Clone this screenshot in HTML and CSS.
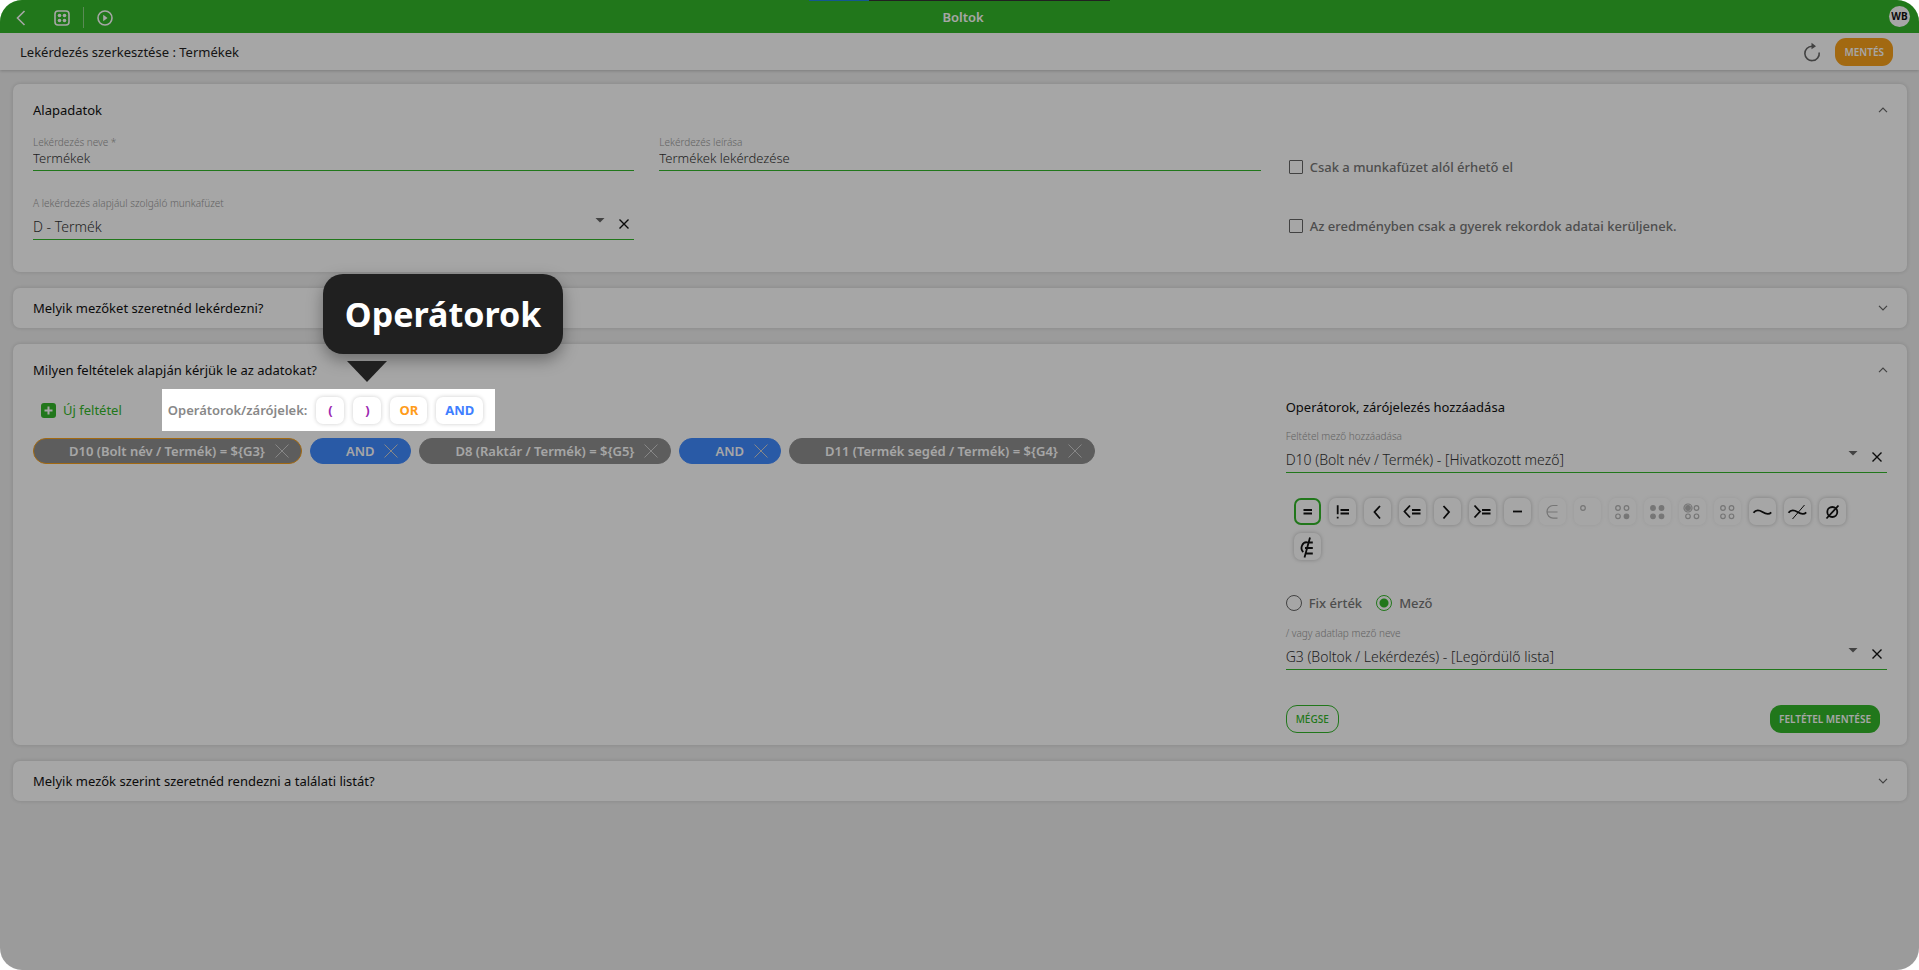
FILE: index.html
```html
<!DOCTYPE html>
<html lang="hu">
<head>
<meta charset="utf-8">
<title>Boltok</title>
<link rel="stylesheet" href="styles.css">
</head>
<body>
<div class="app">
  <header class="topbar">
    <nav class="topbar-nav" aria-label="Navigáció">
      <button class="icon-btn back" aria-label="Vissza"><svg width="10" height="16" viewBox="0 0 10 16"><path d="M8.500 1L1.500 8l7 7"/></svg></button>
      <button class="icon-btn grid" aria-label="Alkalmazások"><svg width="16" height="16" viewBox="0 0 16 16"><rect x="1" y="1" width="14" height="14" rx="3"/><circle class="dot" cx="5.500" cy="5.500" r="1.800"/><circle class="dot" cx="10.500" cy="5.500" r="1.800"/><circle class="dot" cx="5.500" cy="10.500" r="1.800"/><circle class="dot" cx="10.500" cy="10.500" r="1.800"/></svg></button>
      <button class="icon-btn play" aria-label="Indítás"><svg width="16" height="16" viewBox="0 0 16 16"><circle cx="8" cy="8" r="7"/><path class="dot" d="M6.200 4.800v6.400L10.500 8z"/></svg></button>
    </nav>
    <h1 class="topbar-title">Boltok</h1>
    <span class="avatar">WB</span>
    <div class="progress"><span class="progress-value"></span></div>
  </header>

  <div class="subbar">
    <h2 class="subbar-title">Lekérdezés szerkesztése : Termékek</h2>
    <button class="icon-btn refresh" aria-label="Frissítés"><svg width="18" height="20" viewBox="0 0 18 20"><path d="M16.200 10.500A7.200 7.200 0 1 1 9 4.200h2.500"/><path class="dot" d="M8.500 0.800L13 4.300 8.500 7.200z"/></svg></button>
    <button class="btn btn-save">MENTÉS</button>
  </div>

  <main class="content">
    <section class="card">
      <div class="card-head">
        <h3>Alapadatok</h3>
        <button class="icon-btn toggle" aria-label="Becsukás"><svg width="10" height="6" viewBox="0 0 10 6"><path d="M1 5.200L5 1.200l4 4"/></svg></button>
      </div>
      <div class="basics">
        <div class="field">
          <label for="q-name">Lekérdezés neve *</label>
          <input id="q-name" type="text" value="Termékek">
        </div>
        <div class="field">
          <label for="q-desc">Lekérdezés leírása</label>
          <input id="q-desc" type="text" value="Termékek lekérdezése">
        </div>
        <div class="checks">
          <label class="check"><input type="checkbox"><span>Csak a munkafüzet alól érhető el</span></label>
          <label class="check"><input type="checkbox"><span>Az eredményben csak a gyerek rekordok adatai kerüljenek.</span></label>
        </div>
        <div class="field field-select">
          <label for="q-base">A lekérdezés alapjául szolgáló munkafüzet</label>
          <div class="select-row">
            <select id="q-base"><option>D - Termék</option></select>
            <svg class="caret" width="10" height="5" viewBox="0 0 10 5"><path d="M0.500 0h9L5 4.500z"/></svg>
            <button class="icon-btn clear" aria-label="Törlés"><svg width="12" height="12" viewBox="0 0 12 12"><path d="M1.500 1.500l9 9M10.500 1.500l-9 9"/></svg></button>
          </div>
        </div>
      </div>
    </section>

    <section class="card card-closed">
      <div class="card-head">
        <h3>Melyik mezőket szeretnéd lekérdezni?</h3>
        <button class="icon-btn toggle" aria-label="Kinyitás"><svg width="10" height="6" viewBox="0 0 10 6"><path d="M1 0.800l4 4 4-4"/></svg></button>
      </div>
    </section>

    <section class="card card-conditions">
      <div class="card-head">
        <h3>Milyen feltételek alapján kérjük le az adatokat?</h3>
        <button class="icon-btn toggle" aria-label="Becsukás"><svg width="10" height="6" viewBox="0 0 10 6"><path d="M1 5.200L5 1.200l4 4"/></svg></button>
      </div>
      <div class="conditions">
        <div class="builder">
          <div class="toolbar">
            <button class="add"><svg width="15" height="15" viewBox="0 0 15 15"><rect width="15" height="15" rx="3"/><path d="M7.500 3.500v8M3.500 7.500h8"/></svg>Új feltétel</button>
            <div class="spotlight">
              <div class="tooltip" role="tooltip">Operátorok</div>
              <span class="spotlight-label">Operátorok/zárójelek:</span>
              <button class="token paren">(</button>
              <button class="token paren">)</button>
              <button class="token or">OR</button>
              <button class="token and">AND</button>
            </div>
          </div>
          <div class="chips">
            <span class="chip chip-active">D10 (Bolt név / Termék) = ${G3}<button class="icon-btn" aria-label="Törlés"><svg width="16" height="16" viewBox="0 0 16 16"><path d="M1.500 1.500l13 13M14.500 1.500l-13 13"/></svg></button></span>
            <span class="chip chip-and">AND<button class="icon-btn" aria-label="Törlés"><svg width="16" height="16" viewBox="0 0 16 16"><path d="M1.500 1.500l13 13M14.500 1.500l-13 13"/></svg></button></span>
            <span class="chip">D8 (Raktár / Termék) = ${G5}<button class="icon-btn" aria-label="Törlés"><svg width="16" height="16" viewBox="0 0 16 16"><path d="M1.500 1.500l13 13M14.500 1.500l-13 13"/></svg></button></span>
            <span class="chip chip-and">AND<button class="icon-btn" aria-label="Törlés"><svg width="16" height="16" viewBox="0 0 16 16"><path d="M1.500 1.500l13 13M14.500 1.500l-13 13"/></svg></button></span>
            <span class="chip">D11 (Termék segéd / Termék) = ${G4}<button class="icon-btn" aria-label="Törlés"><svg width="16" height="16" viewBox="0 0 16 16"><path d="M1.500 1.500l13 13M14.500 1.500l-13 13"/></svg></button></span>
          </div>
        </div>

        <form class="editor">
          <h4>Operátorok, zárójelezés hozzáadása</h4>
          <div class="field field-select">
            <label for="c-field">Feltétel mező hozzáadása</label>
            <div class="select-row">
              <select id="c-field"><option>D10 (Bolt név / Termék) - [Hivatkozott mező]</option></select>
              <svg class="caret" width="10" height="5" viewBox="0 0 10 5"><path d="M0.500 0h9L5 4.500z"/></svg>
              <button type="button" class="icon-btn clear" aria-label="Törlés"><svg width="12" height="12" viewBox="0 0 12 12"><path d="M1.500 1.500l9 9M10.500 1.500l-9 9"/></svg></button>
            </div>
          </div>
          <div class="ops">
            <button type="button" class="op selected" aria-label="Egyenlő"><svg viewBox="0 0 27 27"><path d="M9.500 12h8.500M9.500 15.500h8.500"/></svg></button>
            <button type="button" class="op" aria-label="Nem egyenlő"><svg viewBox="0 0 27 27"><path d="M8.700 7.200v9M8.700 18.700v1.800M11.500 12h8.500M11.500 15.500h8.500"/></svg></button>
            <button type="button" class="op" aria-label="Kisebb"><svg viewBox="0 0 27 27"><path d="M16 8l-5.500 6 5.500 6.500"/></svg></button>
            <button type="button" class="op" aria-label="Kisebb vagy egyenlő"><svg viewBox="0 0 27 27"><path d="M11 7.500l-5.500 6 5.500 6M13 12h8.500M13 15.500h8.500"/></svg></button>
            <button type="button" class="op" aria-label="Nagyobb"><svg viewBox="0 0 27 27"><path d="M9.500 8l5.500 6-5.500 6.500"/></svg></button>
            <button type="button" class="op" aria-label="Nagyobb vagy egyenlő"><svg viewBox="0 0 27 27"><path d="M5.500 7.500l5.500 6-5.500 6M13 12h8.500M13 15.500h8.500"/></svg></button>
            <button type="button" class="op" aria-label="Tartomány"><svg viewBox="0 0 27 27"><path d="M9 13.500h9"/></svg></button>
            <button type="button" class="op" disabled aria-label="Eleme"><svg viewBox="0 0 27 27"><path d="M18.500 7.500h-4.500a6 6.300 0 0 0 0 12.600h4.500M8 14h10.500"/></svg></button>
            <button type="button" class="op" disabled aria-label="Egy"><svg viewBox="0 0 27 27"><circle cx="9" cy="10" r="2.300"/></svg></button>
            <button type="button" class="op" disabled aria-label="Pontosan egy"><svg viewBox="0 0 27 27"><circle cx="9" cy="10" r="2.300"/><circle cx="17.500" cy="10" r="2.300"/><circle cx="9" cy="18.300" r="2.300"/><circle class="full" cx="17.500" cy="18.300" r="2.300"/></svg></button>
            <button type="button" class="op" disabled aria-label="Mind"><svg viewBox="0 0 27 27"><circle class="full" cx="9" cy="10" r="2.300"/><circle class="full" cx="17.500" cy="10" r="2.300"/><circle class="full" cx="9" cy="18.300" r="2.300"/><circle class="full" cx="17.500" cy="18.300" r="2.300"/></svg></button>
            <button type="button" class="op" disabled aria-label="Legalább egy"><svg viewBox="0 0 27 27"><circle cx="9" cy="10" r="4"/><circle class="full" cx="9" cy="10" r="2.300"/><circle cx="17.500" cy="10" r="2.300"/><circle cx="9" cy="18.300" r="2.300"/><circle cx="17.500" cy="18.300" r="2.300"/></svg></button>
            <button type="button" class="op" disabled aria-label="Egyik sem"><svg viewBox="0 0 27 27"><circle cx="9" cy="10" r="2.300"/><circle cx="17.500" cy="10" r="2.300"/><circle cx="9" cy="18.300" r="2.300"/><circle cx="17.500" cy="18.300" r="2.300"/></svg></button>
            <button type="button" class="op" aria-label="Hasonló"><svg viewBox="0 0 27 27"><path d="M4.500 14.800c2.500-3.500 5.500-3 9-.8s6.500 2.800 8.700.300"/></svg></button>
            <button type="button" class="op" aria-label="Nem hasonló"><svg viewBox="0 0 27 27"><path d="M4.500 14.800c2.500-3.500 5.500-3 9-.8s6.500 2.800 8.700.300"/><path class="thin" d="M20.500 7L8.500 21"/></svg></button>
            <button type="button" class="op" aria-label="Üres"><svg viewBox="0 0 27 27"><circle cx="13.300" cy="14" r="5"/><path d="M19.500 7.500L7.500 20.500"/></svg></button>
            <button type="button" class="op" aria-label="Nem eleme"><svg viewBox="0 0 27 27"><path d="M18.800 9.500h-5a5 5.500 0 0 0-4.500 9.500M11.500 20.500h7.300M11 15h7.800M16 4.500L10.500 24.500"/></svg></button>
          </div>
          <div class="radios">
            <label class="radio"><input type="radio" name="kind"><span>Fix érték</span></label>
            <label class="radio"><input type="radio" name="kind" checked><span>Mező</span></label>
          </div>
          <div class="field field-select">
            <label for="c-value">/ vagy adatlap mező neve</label>
            <div class="select-row">
              <select id="c-value"><option>G3 (Boltok / Lekérdezés) - [Legördülő lista]</option></select>
              <svg class="caret" width="10" height="5" viewBox="0 0 10 5"><path d="M0.500 0h9L5 4.500z"/></svg>
              <button type="button" class="icon-btn clear" aria-label="Törlés"><svg width="12" height="12" viewBox="0 0 12 12"><path d="M1.500 1.500l9 9M10.500 1.500l-9 9"/></svg></button>
            </div>
          </div>
          <div class="actions">
            <button type="button" class="btn btn-cancel">MÉGSE</button>
            <button type="button" class="btn btn-submit">FELTÉTEL MENTÉSE</button>
          </div>
        </form>
      </div>
    </section>

    <section class="card card-closed">
      <div class="card-head">
        <h3>Melyik mezők szerint szeretnéd rendezni a találati listát?</h3>
        <button class="icon-btn toggle" aria-label="Kinyitás"><svg width="10" height="6" viewBox="0 0 10 6"><path d="M1 0.800l4 4 4-4"/></svg></button>
      </div>
    </section>
  </main>
</div>
</body>
</html>
```
FILE: styles.css
```css
:root {
  --green: #34b72a;
  --orange: #f9a11b;
  --blue: #3f8aff;
  --dark: #202020;
}

* { box-sizing: border-box; }

body {
  margin: 0;
  background: #fff;
  font-family: "Noto Sans", "Open Sans", sans-serif;
  font-size: 13px;
  line-height: 18px;
  color: #111;
}

h1, h2, h3, h4 { margin: 0; font-weight: 400; font-size: 13px; }

button, input, select { font: inherit; color: inherit; margin: 0; }

button { border: 0; padding: 0; background: none; }

svg { display: block; fill: none; stroke: currentColor; }

.dot { fill: currentColor; stroke: none; }

.app {
  min-height: 100vh;
  overflow: hidden;
  border-radius: 22px;
  background: #efefef;
}

.icon-btn { display: flex; align-items: center; justify-content: center; }

/* Top bar */
.topbar {
  position: relative;
  display: grid;
  grid-template-columns: 1fr auto 1fr;
  align-items: center;
  height: 33px;
  padding: 0 9px 0 16px;
  background: var(--green);
  color: #fff;
}

.topbar-nav { display: flex; align-items: center; height: 21px; padding-top: 2px; }
.topbar-nav svg { stroke-width: 1.6; }
.topbar-nav .grid { margin-left: 28px; }
.topbar-nav .play {
  height: 21px;
  margin-left: 13px;
  padding-left: 13px;
  border-left: 1px solid #8bd485;
}

.topbar-title { font-weight: 600; }

.avatar {
  justify-self: end;
  width: 21px;
  height: 21px;
  border-radius: 50%;
  background: #fff;
  color: #111;
  font-size: 10px;
  font-weight: 700;
  line-height: 21px;
  text-align: center;
}

.progress {
  position: absolute;
  top: 0;
  left: 50%;
  width: 301px;
  height: 1px;
  margin-left: -151px;
  background: #333;
}

.progress-value { display: block; width: 20%; height: 1px; background: #1f86dd; }

/* Sub bar */
.subbar {
  display: flex;
  align-items: center;
  height: 37px;
  padding: 0 26px 0 20px;
  background: #fff;
  box-shadow: 0 1px 3px rgba(0, 0, 0, .2);
}

.subbar-title { flex: 1; color: #222; }
.refresh { margin-right: 14px; color: #666; }
.refresh svg { stroke-width: 1.6; }

.btn {
  height: 28px;
  padding: 0 9px;
  border-radius: 11px;
  font-size: 10px;
  font-weight: 600;
}

.btn-save { background: var(--orange); color: #fff; }
.btn-submit { background: var(--green); color: #fff; }
.btn-cancel { border: 1px solid var(--green); color: var(--green); font-weight: 500; }

/* Cards */
.content {
  display: flex;
  flex-direction: column;
  gap: 16px;
  padding: 14px 12px 24px 13px;
}

.card {
  padding: 0 20px;
  border-radius: 7px;
  background: #fff;
  box-shadow: 0 0 4px rgba(0, 0, 0, .16);
}

.card-head {
  display: flex;
  align-items: center;
  justify-content: space-between;
  height: 51px;
}

.card-closed .card-head { height: 40px; }
.card-conditions .card-head { height: 45px; padding-top: 7px; }
.toggle { width: 8px; height: 10px; color: #666; }
.toggle svg { flex: none; stroke-width: 1.2; }

/* Fields */
.field { display: flex; flex-direction: column; }

.field label { font-size: 10px; line-height: 14px; color: #999; font-weight: 300; }

.field input,
.field select {
  width: 100%;
  padding: 0;
  border: 0;
  border-radius: 0;
  outline: 0;
  background: none;
  appearance: none;
  color: #333;
  font-weight: 300;
}

.field input { height: 22px; padding-bottom: 4px; border-bottom: 1px solid var(--green); }

.select-row {
  display: flex;
  align-items: center;
  height: 30px;
  padding-right: 4px;
  border-bottom: 1px solid var(--green);
}

.field-select select { flex: 1; align-self: flex-end; height: 24px; font-size: 14px; }
.caret { margin-bottom: 9px; fill: #666; stroke: none; }
.clear { width: 12px; height: 12px; margin: 0 0 2px 13px; color: #111; }
.clear svg { stroke-width: 1.4; }

.basics {
  display: grid;
  grid-template-columns: repeat(3, 1fr);
  column-gap: 25px;
  row-gap: 25px;
  padding-bottom: 32px;
}

.checks {
  grid-column: 3;
  grid-row: 1 / span 2;
  display: flex;
  flex-direction: column;
  gap: 41px;
  padding: 23px 0 0 3px;
}

.check { display: flex; align-items: center; gap: 7px; color: #777; font-weight: 500; }

.check input {
  width: 14px;
  height: 14px;
  border: 1px solid #666;
  border-radius: 1px;
  appearance: none;
}

/* Conditions */
.conditions {
  display: grid;
  grid-template-columns: repeat(3, 1fr);
  column-gap: 25px;
  padding-bottom: 12px;
}

.builder { grid-column: span 2; }

.toolbar { display: flex; align-items: center; gap: 40px; padding-left: 8px; }

.add { display: flex; align-items: center; gap: 7px; color: var(--green); }
.add svg { fill: var(--green); stroke: none; }
.add path { stroke: #fff; stroke-width: 2; }

/* Highlighted block: its outer shadow dims everything else */
.spotlight {
  position: relative;
  z-index: 10;
  display: flex;
  align-items: center;
  gap: 9px;
  height: 42px;
  padding: 0 12px 0 6px;
  background: #fff;
  box-shadow: 0 0 0 3000px rgba(0, 0, 0, .35);
}

.spotlight-label { font-weight: 600; color: #888; }

.token {
  height: 27px;
  min-width: 28px;
  padding: 0 9px;
  border-radius: 7px;
  background: #fff;
  box-shadow: 0 0 4px rgba(0, 0, 0, .2);
  font-weight: 700;
}

.paren { color: #9c27b0; }
.or { color: #ff9c1a; }
.and { color: #3f7fff; }

.tooltip {
  position: absolute;
  bottom: 77px;
  left: 161px;
  padding: 16px 22px;
  border-radius: 20px;
  background: var(--dark);
  box-shadow: 0 6px 16px rgba(0, 0, 0, .35);
  color: #fff;
  font-size: 34px;
  font-weight: 700;
  line-height: 48px;
}

.tooltip::after {
  content: "";
  position: absolute;
  top: 87px;
  left: 24px;
  border: 20px solid transparent;
  border-top: 21px solid var(--dark);
  border-bottom: 0;
}

.chips { display: flex; flex-wrap: wrap; gap: 8px; padding-top: 7px; }

.chip {
  display: flex;
  align-items: center;
  gap: 9px;
  height: 26px;
  padding: 0 11px 0 35px;
  border: 1px solid #8f8f8f;
  border-radius: 13px;
  background: #8f8f8f;
  color: #fff;
  font-weight: 600;
}

.chip .icon-btn { color: #d0d0d0; }
.chip-active { border-color: var(--orange); }
.chip-and { border-color: var(--blue); background: var(--blue); }

.editor { padding-top: 9px; }
.editor > h4 { padding-bottom: 13px; }

.ops { display: flex; flex-wrap: wrap; gap: 8px; padding: 25px 20px 0 8px; }

.op {
  width: 27px;
  height: 27px;
  border-radius: 7px;
  background: #fff;
  box-shadow: 0 0 4px rgba(0, 0, 0, .25);
}

.op svg { width: 27px; height: 27px; stroke-width: 1.8; }
.op.selected { box-shadow: inset 0 0 0 2px var(--green); }
.op:disabled { color: #b5b5b5; box-shadow: 0 0 4px rgba(0, 0, 0, .08); }
.op:disabled svg { stroke-width: 1.2; }
.op .full { fill: currentColor; }
.op .thin { stroke-width: 1; }

.radios { display: flex; gap: 14px; padding: 34px 0 14px; }
.radio { display: flex; align-items: center; gap: 7px; color: #777; font-weight: 500; }

.radio input {
  width: 16px;
  height: 16px;
  border: 1px solid #666;
  border-radius: 50%;
  appearance: none;
}

.radio input:checked {
  border-color: var(--green);
  background: radial-gradient(circle, var(--green) 4px, transparent 5px);
}

.actions { display: flex; justify-content: space-between; padding: 35px 7px 0 0; }
```
